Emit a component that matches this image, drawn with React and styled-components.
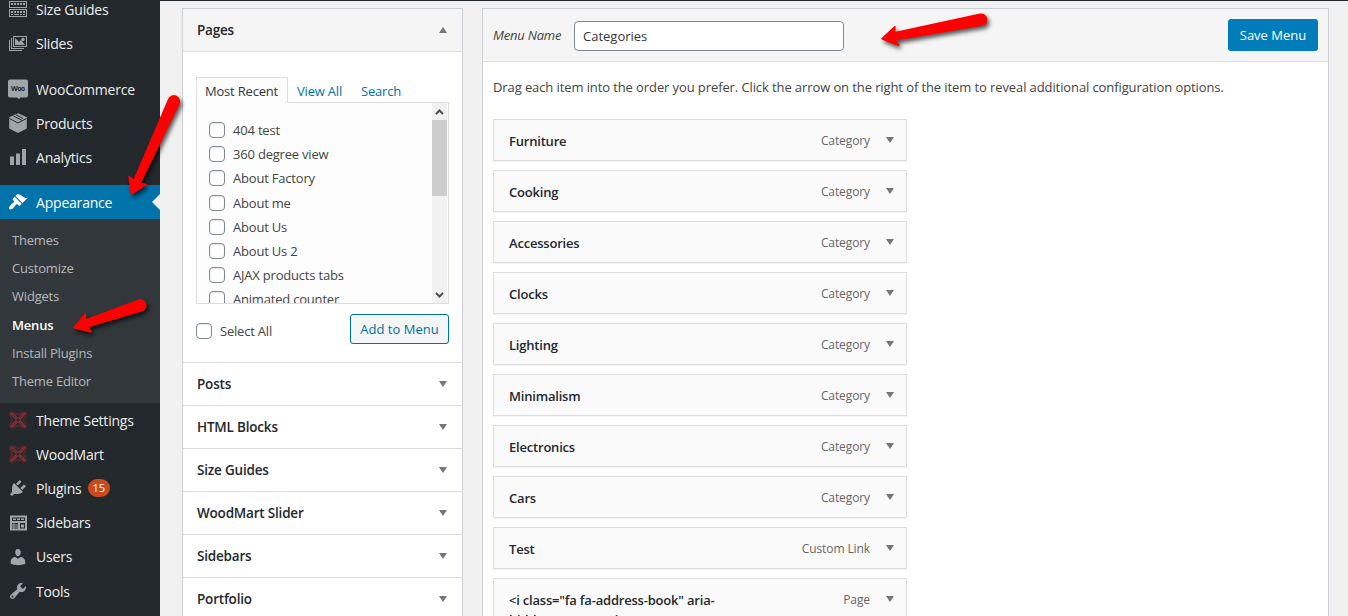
import React, { useState } from 'react';
import styled, { createGlobalStyle } from 'styled-components';

const GlobalStyle = createGlobalStyle`
  * {
    box-sizing: border-box;
  }

  body {
    margin: 0;
    overflow: hidden;
    background: #f1f1f1;
    color: #444;
    font-family: 'Open Sans', 'Noto Sans', sans-serif;
    font-size: 13px;
  }

  ul {
    list-style: none;
    margin: 0;
    padding: 0;
  }
`;

const Page = styled.div`
  position: relative;
  display: flex;
  width: 1348px;
  height: 616px;
  overflow: hidden;
  border-top: 1px solid #23282d;
`;

/* admin sidebar */
const Sidebar = styled.nav`
  flex: 0 0 160px;
  background: #23282d;
  overflow: hidden;
`;

const SideMenu = styled.ul`
  margin-top: -9px;
`;

const SideItem = styled.li`
  display: flex;
  align-items: center;
  height: ${(p) => (p.$tall ? '34.2px' : '34px')};
  padding-left: 8px;
  gap: 8px;
  position: relative;
  color: ${(p) => (p.$active ? '#fff' : '#eee')};
  background: ${(p) => (p.$active ? '#0073aa' : 'transparent')};
  font-size: 14px;
  letter-spacing: -0.2px;
  white-space: nowrap;

  svg {
    flex: 0 0 20px;
    color: ${(p) => (p.$active ? '#fff' : '#a0a5aa')};
  }

  &::after {
    content: '';
    display: ${(p) => (p.$active ? 'block' : 'none')};
    position: absolute;
    right: 0;
    top: 9px;
    border: 8px solid transparent;
    border-left-width: 0;
    border-right-color: #f1f1f1;
  }
`;

const Separator = styled.li`
  height: ${(p) => p.$size || 11}px;
`;

const SubMenu = styled.ul`
  height: 184px;
  padding: 7px 0 0 12px;
  background: #32373c;
`;

const SubItem = styled.li`
  height: 28.2px;
  line-height: 28.2px;
  font-size: 13px;
  letter-spacing: -0.2px;
  color: ${(p) => (p.$current ? '#fff' : '#b4b9be')};
  font-weight: ${(p) => (p.$current ? 600 : 400)};
`;

const Count = styled.span`
  display: inline-block;
  height: 18px;
  margin-left: -2px;
  padding: 0 5px;
  border-radius: 9px;
  background: #ca4a1f;
  color: #fff;
  font-size: 11px;
  line-height: 18px;
  letter-spacing: 0;
  min-width: 22px;
  text-align: center;
`;

/* main area */
const Main = styled.main`
  flex: 1;
  display: flex;
  align-items: flex-start;
  padding: 7px 19px 0 22px;
`;

const Accordion = styled.section`
  flex: 0 0 281px;
  margin-right: 19px;
  height: 640px;
  border: 1px solid #ccd0d4;
  background: #fff;
`;

const SectionHead = styled.h3`
  display: flex;
  align-items: center;
  justify-content: space-between;
  height: 43px;
  margin: 0;
  padding: 0 15px 0 14px;
  border-bottom: 1px solid #ddd;
  background: ${(p) => (p.$open ? '#f5f5f5' : '#fff')};
  color: #23282d;
  font-size: 13.5px;
  font-weight: 600;
  letter-spacing: -0.2px;
`;

const Arrow = styled.span`
  width: 0;
  height: 0;
  border: 4px solid transparent;
  ${(p) => (p.$up ? 'border-bottom: 6px solid #72777c; border-top: 0;' : 'border-top: 6px solid #72777c; border-bottom: 0;')}
`;

const SectionBody = styled.div`
  height: 311px;
  padding: 25px 13px 0;
  border-bottom: 1px solid #ddd;
`;

const Tabs = styled.div`
  display: flex;
  height: 26px;
  margin-bottom: -1px;
`;

const Tab = styled.button`
  height: 26px;
  padding: 0 9px;
  border: 1px solid ${(p) => (p.$active ? '#ddd' : 'transparent')};
  border-bottom: 0;
  background: ${(p) => (p.$active ? '#fdfdfd' : 'transparent')};
  color: ${(p) => (p.$active ? '#32373c' : '#0073aa')};
  font: inherit;
  letter-spacing: -0.2px;
  position: relative;
  width: ${(p) => p.$width}px;
  padding: 0 0 0 8px;
  text-align: left;
  white-space: nowrap;
`;

const TabPanel = styled.div`
  display: flex;
  height: 202px;
  border: 1px solid #ddd;
  background: #fdfdfd;
  overflow: hidden;
`;

const CheckList = styled.ul`
  flex: 1;
  padding: 15px 0 0 12px;
`;

const CheckItem = styled.li`
  height: 24.2px;
  padding-top: 4px;
`;

const CheckLabel = styled.label`
  display: flex;
  align-items: center;
  gap: 8px;
  height: 16px;
  letter-spacing: -0.2px;
  white-space: nowrap;
`;

const Checkbox = styled.input`
  appearance: none;
  width: 16px;
  height: 16px;
  margin: 0;
  border: 1px solid #7e8993;
  border-radius: 4px;
  background: #fff;
  box-shadow: inset 0 1px 2px rgba(0, 0, 0, 0.1);
`;

const Scrollbar = styled.div`
  display: flex;
  flex-direction: column;
  align-items: center;
  justify-content: space-between;
  width: 15px;
  margin-right: 1px;
  background: #f1f1f1;
`;

const ScrollThumb = styled.div`
  width: 15px;
  height: 76px;
  margin-bottom: auto;
  background: #cdcdcd;
`;

const ScrollButton = styled.span`
  display: flex;
  align-items: center;
  justify-content: center;
  height: 17px;
`;

const PanelActions = styled.div`
  display: flex;
  justify-content: space-between;
  padding-top: 10px;
`;

const SelectAll = styled.div`
  padding-top: 9px;
`;

const AddButton = styled.button`
  width: 99px;
  height: 30px;
  padding: 0;
  border: 1px solid #0071a1;
  border-radius: 3px;
  background: #f3f5f6;
  color: #0071a1;
  font: inherit;
  letter-spacing: 0;
`;

/* menu editor */
const Editor = styled.section`
  flex: 1;
  height: 640px;
  border: 1px solid #ccd0d4;
  background: #fff;
`;

const EditorHead = styled.header`
  display: flex;
  align-items: center;
  height: 53px;
  padding: 0 10px;
  border-bottom: 1px solid #ddd;
  background: #f5f5f5;
`;

const NameLabel = styled.label`
  width: 81px;
  font-style: italic;
  letter-spacing: -0.2px;
  white-space: nowrap;
`;

const NameInput = styled.input`
  width: 270px;
  height: 30px;
  padding: 0 8px;
  margin-top: 2px;
  border: 1px solid #7e8993;
  border-radius: 4px;
  background: #fff;
  color: #32373c;
  font: inherit;
  letter-spacing: 0;
`;

const SaveButton = styled.button`
  width: 90px;
  height: 32px;
  margin-left: auto;
  padding: 0;
  border: 0;
  border-radius: 3px;
  background: #007cba;
  color: #fff;
  font: inherit;
`;

const EditorBody = styled.div`
  padding: 16px 10px 0;
`;

const Hint = styled.p`
  margin: 0 0 23px;
  line-height: 18px;
  letter-spacing: -0.1px;
  white-space: nowrap;
`;

const MenuItem = styled.li`
  display: flex;
  width: 414px;
  min-height: 42px;
  margin-bottom: 9px;
  padding: 11px 12px 9px 15px;
  border: 1px solid #ddd;
  background: #fafafa;
  box-shadow: 0 1px 1px rgba(0, 0, 0, 0.04);
  line-height: 20px;
`;

const ItemTitle = styled.span`
  width: 230px;
  color: #23282d;
  font-weight: 600;
  letter-spacing: -0.2px;
`;

const ItemType = styled.span`
  margin-left: auto;
  margin-right: 16px;
  color: #666;
  font-size: 12px;
  letter-spacing: -0.1px;
`;

const ItemArrow = styled(Arrow)`
  margin-top: 6px;
`;

const Pointers = styled.svg`
  position: absolute;
  left: 0;
  top: -1px;
  pointer-events: none;
  filter: drop-shadow(2px 3px 2px rgba(0, 0, 0, 0.65));
`;

const Icon = ({ children }) => (
  <svg width="20" height="20" viewBox="0 0 20 20" fill="currentColor">
    {children}
  </svg>
);

const icons = {
  sizes: (
    <Icon>
      <path fillRule="evenodd" d="M1 2h18v7H1zM2 3v5h16V3zM1 10h18v8H1zM2 11v6h16v-6z" />
      <path d="M3 4h2v2H3zM6 4h2v2H6zM9 4h2v2H9zM12 4h2v2h-2zM15 4h2v2h-2zM3 12h2v2H3zM6 12h2v2H6zM9 12h2v2H9zM12 12h2v2h-2zM15 12h2v2h-2zM3 15h2v1H3zM6 15h5v1H6zM12 15h2v1h-2zM15 15h2v1h-2z" />
    </Icon>
  ),
  slides: (
    <Icon>
      <path d="M5 3h14v11H5zM6 4v9h12V4z" fillRule="evenodd" />
      <path d="M3 5h1v10h12v1H3zM1 7h1v10h12v1H1zM7 5l4 4 2-2 4 5H7z" />
      <circle cx="15" cy="6.5" r="1.7" />
    </Icon>
  ),
  woo: (
    <Icon>
      <path d="M2 .5h16a2 2 0 0 1 2 2v14a2 2 0 0 1-2 2h-6l-.5 2-2.5-2H2a2 2 0 0 1-2-2v-14a2 2 0 0 1 2-2z" />
      <text x="10" y="11.6" textAnchor="middle" fontSize="7" fontWeight="700" fill="#23282d" textLength="14" fontFamily="Open Sans">Woo</text>
    </Icon>
  ),
  products: (
    <Icon>
      <path d="M10 0.2l8.8 4v11.4L10 20l-8.8-4.4V4.200z" />
      <path d="M1.500 5.500L10 10l8.500-4.500M5.500 3l8.300 4.300M8 1.800l7 3.800" fill="none" stroke="#23282d" strokeWidth="1" />
    </Icon>
  ),
  analytics: (
    <Icon>
      <path d="M2 9.500h4V18H2zM8 6.500h4V18H8zM14 2h4v16h-4z" />
    </Icon>
  ),
  appearance: (
    <Icon>
      <path d="M14.480 11.060L7.410 3.990l1.500-1.500c.5-.56 2.300-.47 3.510.32 1.210.8 1.430 1.280 2.910 2.100 1.180.64 2.450 1.260 4.450.85zm-.71.71L6.700 4.700 4.930 6.470c-.39.39-.39 1.020 0 1.410l1.060 1.060c.39.39.39 1.030 0 1.420-.6.6-1.430 1.110-2.210 1.690-.35.26-.7.53-1.010.84C1.430 14.230.4 16.080 1.400 17.070c.99 1 2.840-.03 4.180-1.360.31-.31.58-.66.85-1.020.57-.78 1.080-1.610 1.690-2.210.39-.39 1.020-.39 1.410 0l1.060 1.060c.39.39 1.020.39 1.410 0z" />
    </Icon>
  ),
  woodmart: (
    <Icon>
      <g fill="none" strokeLinejoin="round">
        <path d="M2 2.500c3-1 5 .5 8 2.200 3-1.700 5-3.200 8-2.200.6 3-.8 5-2.600 7.500 1.800 2.500 3.200 4.500 2.600 7.500-3 1-5-.5-8-2.200-3 1.700-5 3.200-8 2.200-.6-3 .8-5 2.600-7.500C2.800 7.500 1.400 5.500 2 2.500z" stroke="#54262b" strokeWidth="1.800" />
        <path d="M3 3c3 1 5 3 7 7s4 6 7 7M17 3c-3 1-5 3-7 7s-4 6-7 7M3 3c1 3 3 5 7 7s6 4 7 7M17 3c-1 3-3 5-7 7s-6 4-7 7" stroke="#8b3236" strokeWidth="1.300" />
      </g>
      <circle cx="10" cy="10" r="2.200" fill="#23282d" stroke="#8b3236" />
    </Icon>
  ),
  plugins: (
    <Icon>
      <path d="M13.110 4.360L9.870 7.600 8 5.730l3.240-3.240c.35-.34 1.050-.2 1.560.32.52.51.66 1.210.31 1.550zm-8 1.770l.91-1.120 9.010 9.010-1.190.84c-.71.71-2.630 1.160-3.820 1.160H6.140L4.900 17.260c-.59.59-1.540.59-2.120 0-.59-.58-.59-1.530 0-2.120l1.240-1.240v-3.880c0-1.130.4-3.190 1.090-3.890zm7.260 3.970l3.240-3.240c.34-.35 1.040-.21 1.550.31.52.51.66 1.210.31 1.550l-3.240 3.250z" />
    </Icon>
  ),
  sidebars: (
    <Icon>
      <path fillRule="evenodd" d="M2 2.500h17v15H2zM4 4.500v3.500h13V4.500zM4 10v1.500h6V10zM4 12.500v1h6v-1zM4 14.500v1h6v-1zM12 10v5.500h5V10z" />
      <path d="M5 5.500h3v1.500H5zM9 5.500h3v1.500H9zM13 5.500h3v1.500h-3zM13 11.500h3v3h-3zM5.500 10h.8v6h-.8z" />
    </Icon>
  ),
  users: (
    <Icon>
      <path d="M10 9.250c-2.270 0-2.730-3.440-2.730-3.440C7 4.020 7.820 2 9.970 2c2.160 0 2.980 2.020 2.710 3.810 0 0-.41 3.440-2.680 3.440zm0 2.570L12.720 10c2.390 0 4.520 2.330 4.520 4.530v2.490s-3.650 1.130-7.240 1.130c-3.650 0-7.240-1.130-7.240-1.130v-2.490c0-2.250 1.940-4.480 4.470-4.480z" />
    </Icon>
  ),
  tools: (
    <Icon>
      <path d="M16.680 9.770c-1.340 1.340-3.300 1.670-4.950.99l-5.410 6.520c-.99.99-2.590.99-3.580 0s-.99-2.590 0-3.570l6.520-5.420c-.68-1.650-.35-3.610.99-4.950 1.280-1.280 3.120-1.620 4.720-1.060l-2.890 2.890 2.820 2.820 2.860-2.870c.53 1.580.18 3.390-1.080 4.650zM3.810 16.210c.4.39 1.040.39 1.430 0 .4-.4.4-1.040 0-1.430-.39-.4-1.030-.4-1.430 0-.39.39-.39 1.030 0 1.430z" />
    </Icon>
  ),
};

const subPages = ['Themes', 'Customize', 'Widgets', 'Menus', 'Install Plugins', 'Theme Editor'];

const pages = [
  '404 test',
  '360 degree view',
  'About Factory',
  'About me',
  'About Us',
  'About Us 2',
  'AJAX products tabs',
  'Animated counter',
];

const sections = ['Posts', 'HTML Blocks', 'Size Guides', 'WoodMart Slider', 'Sidebars', 'Portfolio'];

const tabs = [
  { label: 'Most Recent', width: 92 },
  { label: 'View All', width: 64 },
  { label: 'Search', width: 60 },
];

const menuItems = [
  { title: 'Furniture', type: 'Category' },
  { title: 'Cooking', type: 'Category' },
  { title: 'Accessories', type: 'Category' },
  { title: 'Clocks', type: 'Category' },
  { title: 'Lighting', type: 'Category' },
  { title: 'Minimalism', type: 'Category' },
  { title: 'Electronics', type: 'Category' },
  { title: 'Cars', type: 'Category' },
  { title: 'Test', type: 'Custom Link' },
  { title: '<i class="fa fa-address-book" aria-hidden="true"></i>', type: 'Page' },
];

// red arrow with its tip at x,y and the tail going along the angle
const Pointer = ({ x, y, angle, length }) => (
  <path
    transform={`translate(${x} ${y}) rotate(${angle})`}
    d={`M1 0L16 -9.500L14.500 -3.500L${length} -5.500A5.500 5.500 0 0 1 ${length} 5.500L14.500 3.500L16 9.500Z`}
    fill="#fe0000"
    stroke="#fe0000"
    strokeWidth="1.500"
    strokeLinejoin="round"
  />
);

const ScrollChevron = ({ down }) => (
  <ScrollButton>
    <svg width="9" height="6" viewBox="0 0 9 6" fill="none" stroke="#505050" strokeWidth="2">
      <path d={down ? 'M1 1l3.500 3.500L8 1' : 'M1 5l3.500-3.500L8 5'} />
    </svg>
  </ScrollButton>
);

function AdminMenu() {
  return (
    <Sidebar>
      <SideMenu>
        <SideItem>{icons.sizes}Size Guides</SideItem>
        <SideItem>{icons.slides}Slides</SideItem>
        <Separator $size={12} />
        <SideItem>{icons.woo}WooCommerce</SideItem>
        <SideItem>{icons.products}Products</SideItem>
        <SideItem>{icons.analytics}Analytics</SideItem>
        <Separator />
        <SideItem $active>{icons.appearance}Appearance</SideItem>
        <SubMenu>
          {subPages.map((name) => (
            <SubItem key={name} $current={name === 'Menus'}>{name}</SubItem>
          ))}
        </SubMenu>
        <SideItem $tall>{icons.woodmart}Theme Settings</SideItem>
        <SideItem $tall>{icons.woodmart}WoodMart</SideItem>
        <SideItem $tall>{icons.plugins}Plugins <Count>15</Count></SideItem>
        <SideItem $tall>{icons.sidebars}Sidebars</SideItem>
        <SideItem $tall>{icons.users}Users</SideItem>
        <SideItem $tall>{icons.tools}Tools</SideItem>
      </SideMenu>
    </Sidebar>
  );
}

function PagesAccordion() {
  const [activeTab, setActiveTab] = useState('Most Recent');

  return (
    <Accordion>
      <SectionHead $open>Pages<Arrow $up /></SectionHead>
      <SectionBody>
        <Tabs>
          {tabs.map((tab) => (
            <Tab
              key={tab.label}
              $width={tab.width}
              $active={tab.label === activeTab}
              onClick={() => setActiveTab(tab.label)}
            >
              {tab.label}
            </Tab>
          ))}
        </Tabs>
        <TabPanel>
          <CheckList>
            {pages.map((page) => (
              <CheckItem key={page}>
                <CheckLabel><Checkbox type="checkbox" />{page}</CheckLabel>
              </CheckItem>
            ))}
          </CheckList>
          <Scrollbar>
            <ScrollChevron />
            <ScrollThumb />
            <ScrollChevron down />
          </Scrollbar>
        </TabPanel>
        <PanelActions>
          <SelectAll>
            <CheckLabel><Checkbox type="checkbox" />Select All</CheckLabel>
          </SelectAll>
          <AddButton>Add to Menu</AddButton>
        </PanelActions>
      </SectionBody>
      {sections.map((name) => (
        <SectionHead key={name}>{name}<Arrow /></SectionHead>
      ))}
    </Accordion>
  );
}

function MenuEditor() {
  const [menuName, setMenuName] = useState('Categories');

  return (
    <Editor>
      <EditorHead>
        <NameLabel htmlFor="menu-name">Menu Name</NameLabel>
        <NameInput id="menu-name" value={menuName} onChange={(e) => setMenuName(e.target.value)} />
        <SaveButton>Save Menu</SaveButton>
      </EditorHead>
      <EditorBody>
        <Hint>
          Drag each item into the order you prefer. Click the arrow on the right of the item to reveal additional configuration options.
        </Hint>
        <ul>
          {menuItems.map((item) => (
            <MenuItem key={item.title}>
              <ItemTitle>{item.title}</ItemTitle>
              <ItemType>{item.type}</ItemType>
              <ItemArrow />
            </MenuItem>
          ))}
        </ul>
      </EditorBody>
    </Editor>
  );
}

function App() {
  return (
    <>
      <GlobalStyle />
      <Page>
        <AdminMenu />
        <Main>
          <PagesAccordion />
          <MenuEditor />
        </Main>
        <Pointers width="1348" height="616">
          <Pointer x={131} y={195} angle={-65.4} length={103} />
          <Pointer x={73} y={328} angle={-18.6} length={71} />
          <Pointer x={881} y={39} angle={-10.9} length={102} />
        </Pointers>
      </Page>
    </>
  );
}

export default App;
